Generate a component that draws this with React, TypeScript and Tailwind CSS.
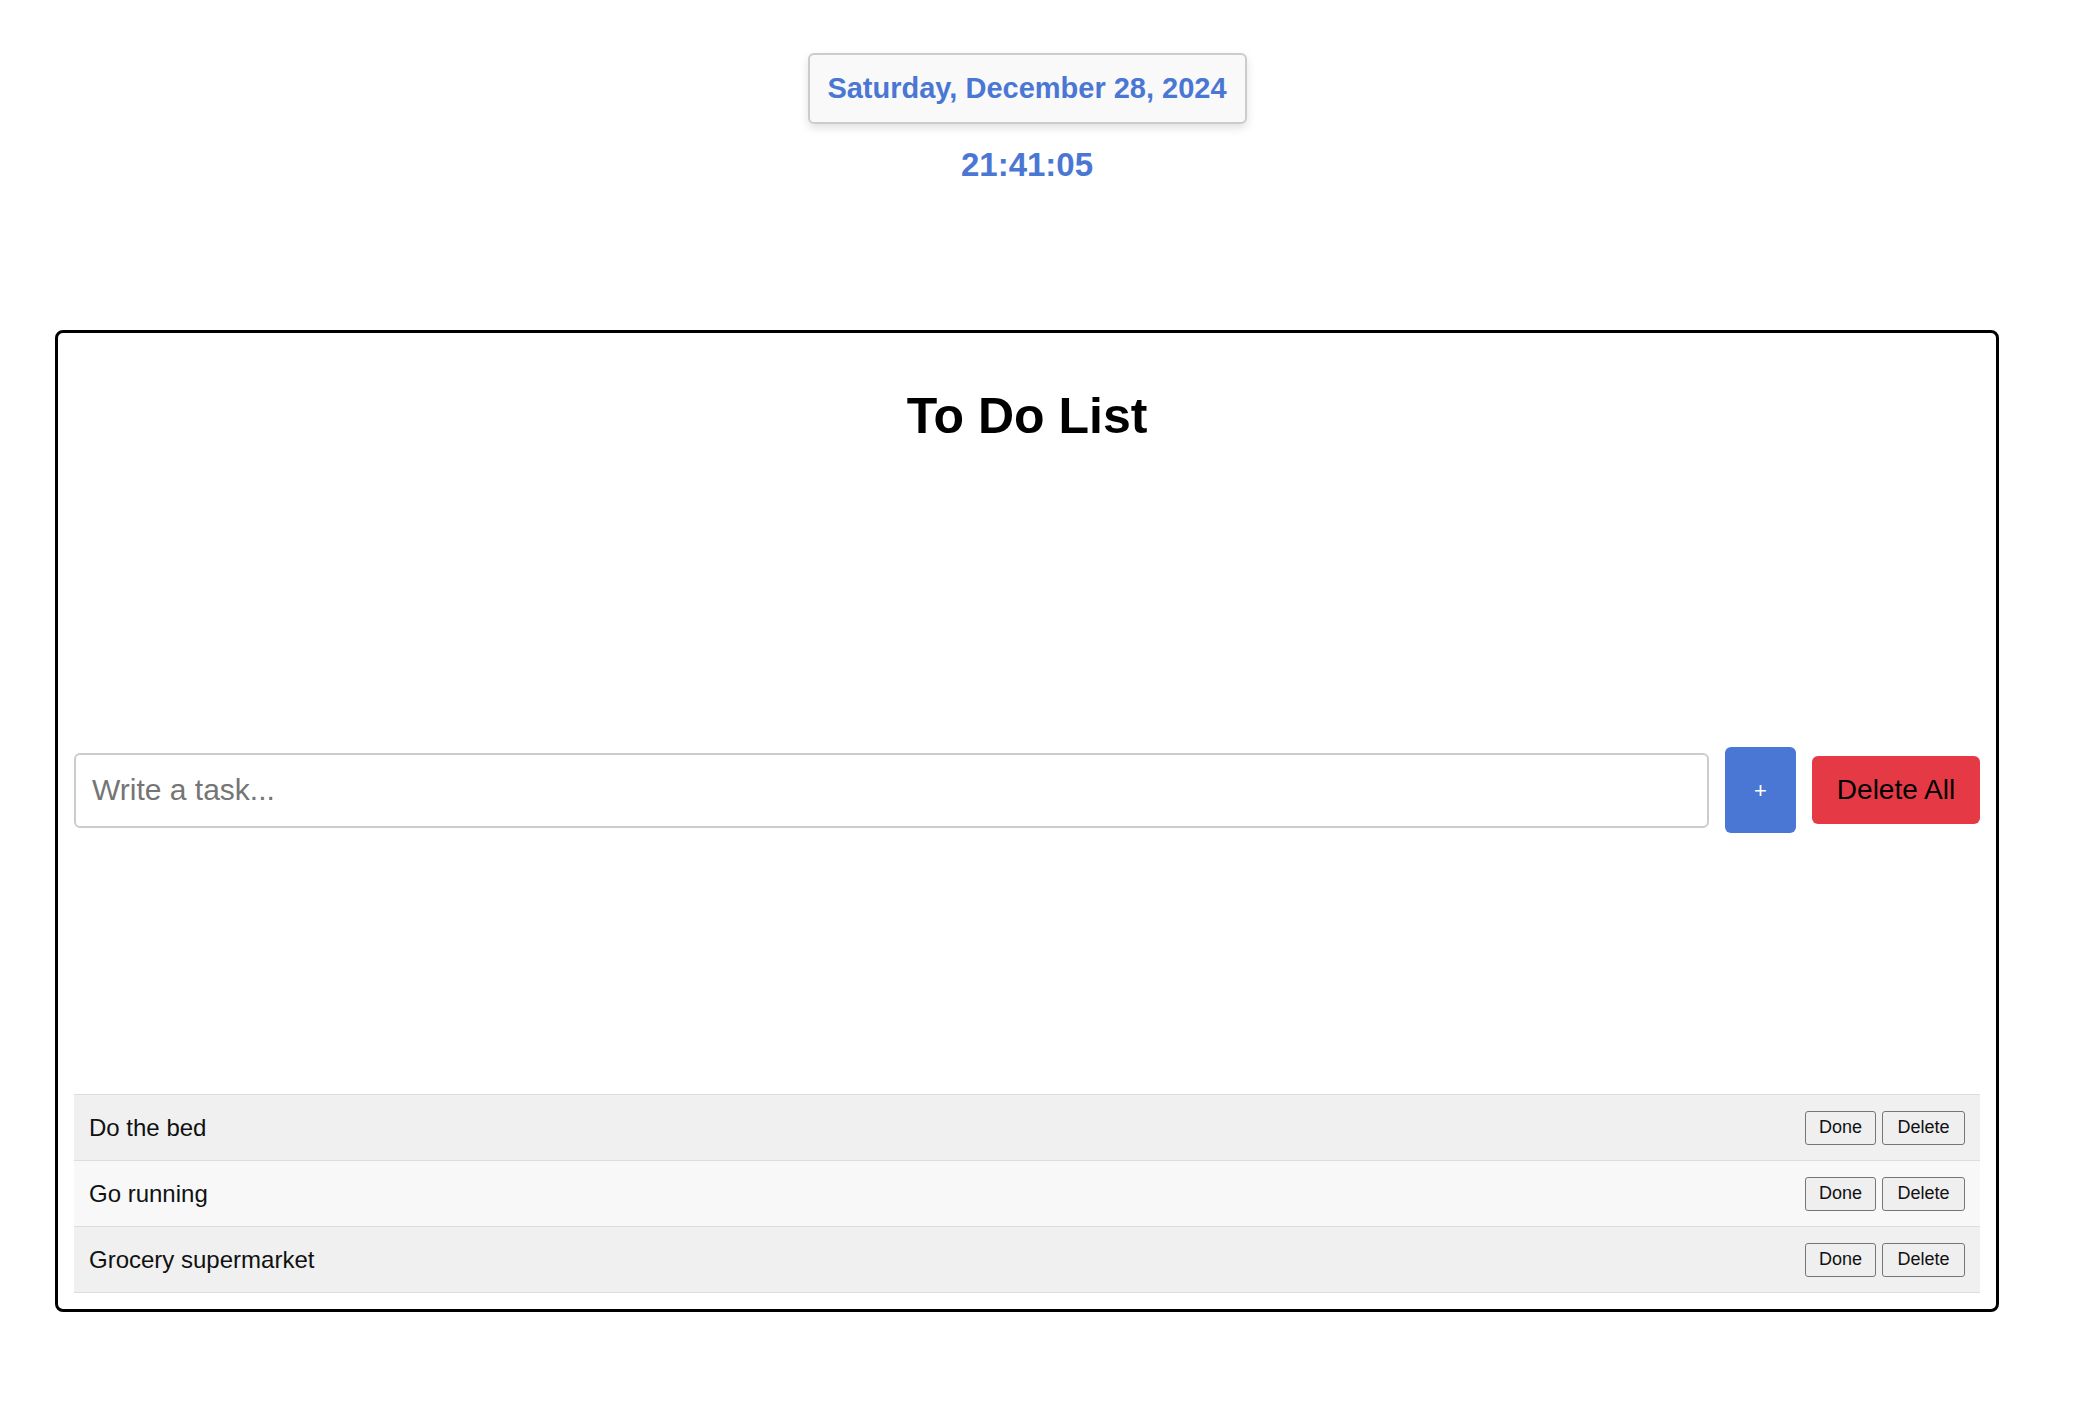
const tasks = ["Do the bed", "Go running", "Grocery supermarket"];

export default function App() {
  return (
    <div className="min-h-screen bg-white font-['Liberation_Sans',sans-serif] text-black">
      <div className="w-[2054px]">
        <div className="flex flex-col items-center pt-[53px]">
          <div className="flex h-[71px] w-[439px] items-center justify-center rounded-md border-2 border-[#cccccc] bg-[#f9f9f9] text-[29px] font-bold text-[#4a77d4] shadow-[0_4px_10px_rgba(0,0,0,0.12)]">
            Saturday, December 28, 2024
          </div>
          <div className="mt-6 text-[33px] leading-none font-bold text-[#4a77d4]">21:41:05</div>
        </div>

        <div className="mx-[55px] mt-[149px] rounded-lg border-[3px] border-black p-4">
          <h1 className="mt-[42px] text-center text-[50px] leading-none font-bold">To Do List</h1>

          <div className="mt-[306px] flex items-center gap-4">
            <input
              type="text"
              placeholder="Write a task..."
              className="h-[75px] flex-1 rounded-md border-2 border-[#cccccc] px-4 text-[30px] outline-none placeholder:text-[#757575]"
            />
            <button className="flex h-[86px] w-[71px] items-center justify-center rounded-md bg-[#4a77d4] text-[22px] text-white">
              +
            </button>
            <button className="h-[68px] w-[168px] rounded-md bg-[#e63946] text-[28px] text-black">Delete All</button>
          </div>

          <ul className="mt-[261px] border-t border-[#dddddd]">
            {tasks.map((task, i) => (
              <li
                key={task}
                className={
                  "flex h-[66px] items-center justify-between border-b border-[#dddddd] px-[15px] " +
                  (i % 2 === 0 ? "bg-[#f0f0f0]" : "bg-[#f8f8f8]")
                }
              >
                <span className="text-[24px] text-[#111111]">{task}</span>
                <div className="flex gap-[6px]">
                  <button className="h-[34px] w-[71px] rounded-[3px] border border-[#767676] bg-[#efefef] text-[18px] text-[#111111]">
                    Done
                  </button>
                  <button className="h-[34px] w-[83px] rounded-[3px] border border-[#767676] bg-[#efefef] text-[18px] text-[#111111]">
                    Delete
                  </button>
                </div>
              </li>
            ))}
          </ul>
        </div>
      </div>
    </div>
  );
}
